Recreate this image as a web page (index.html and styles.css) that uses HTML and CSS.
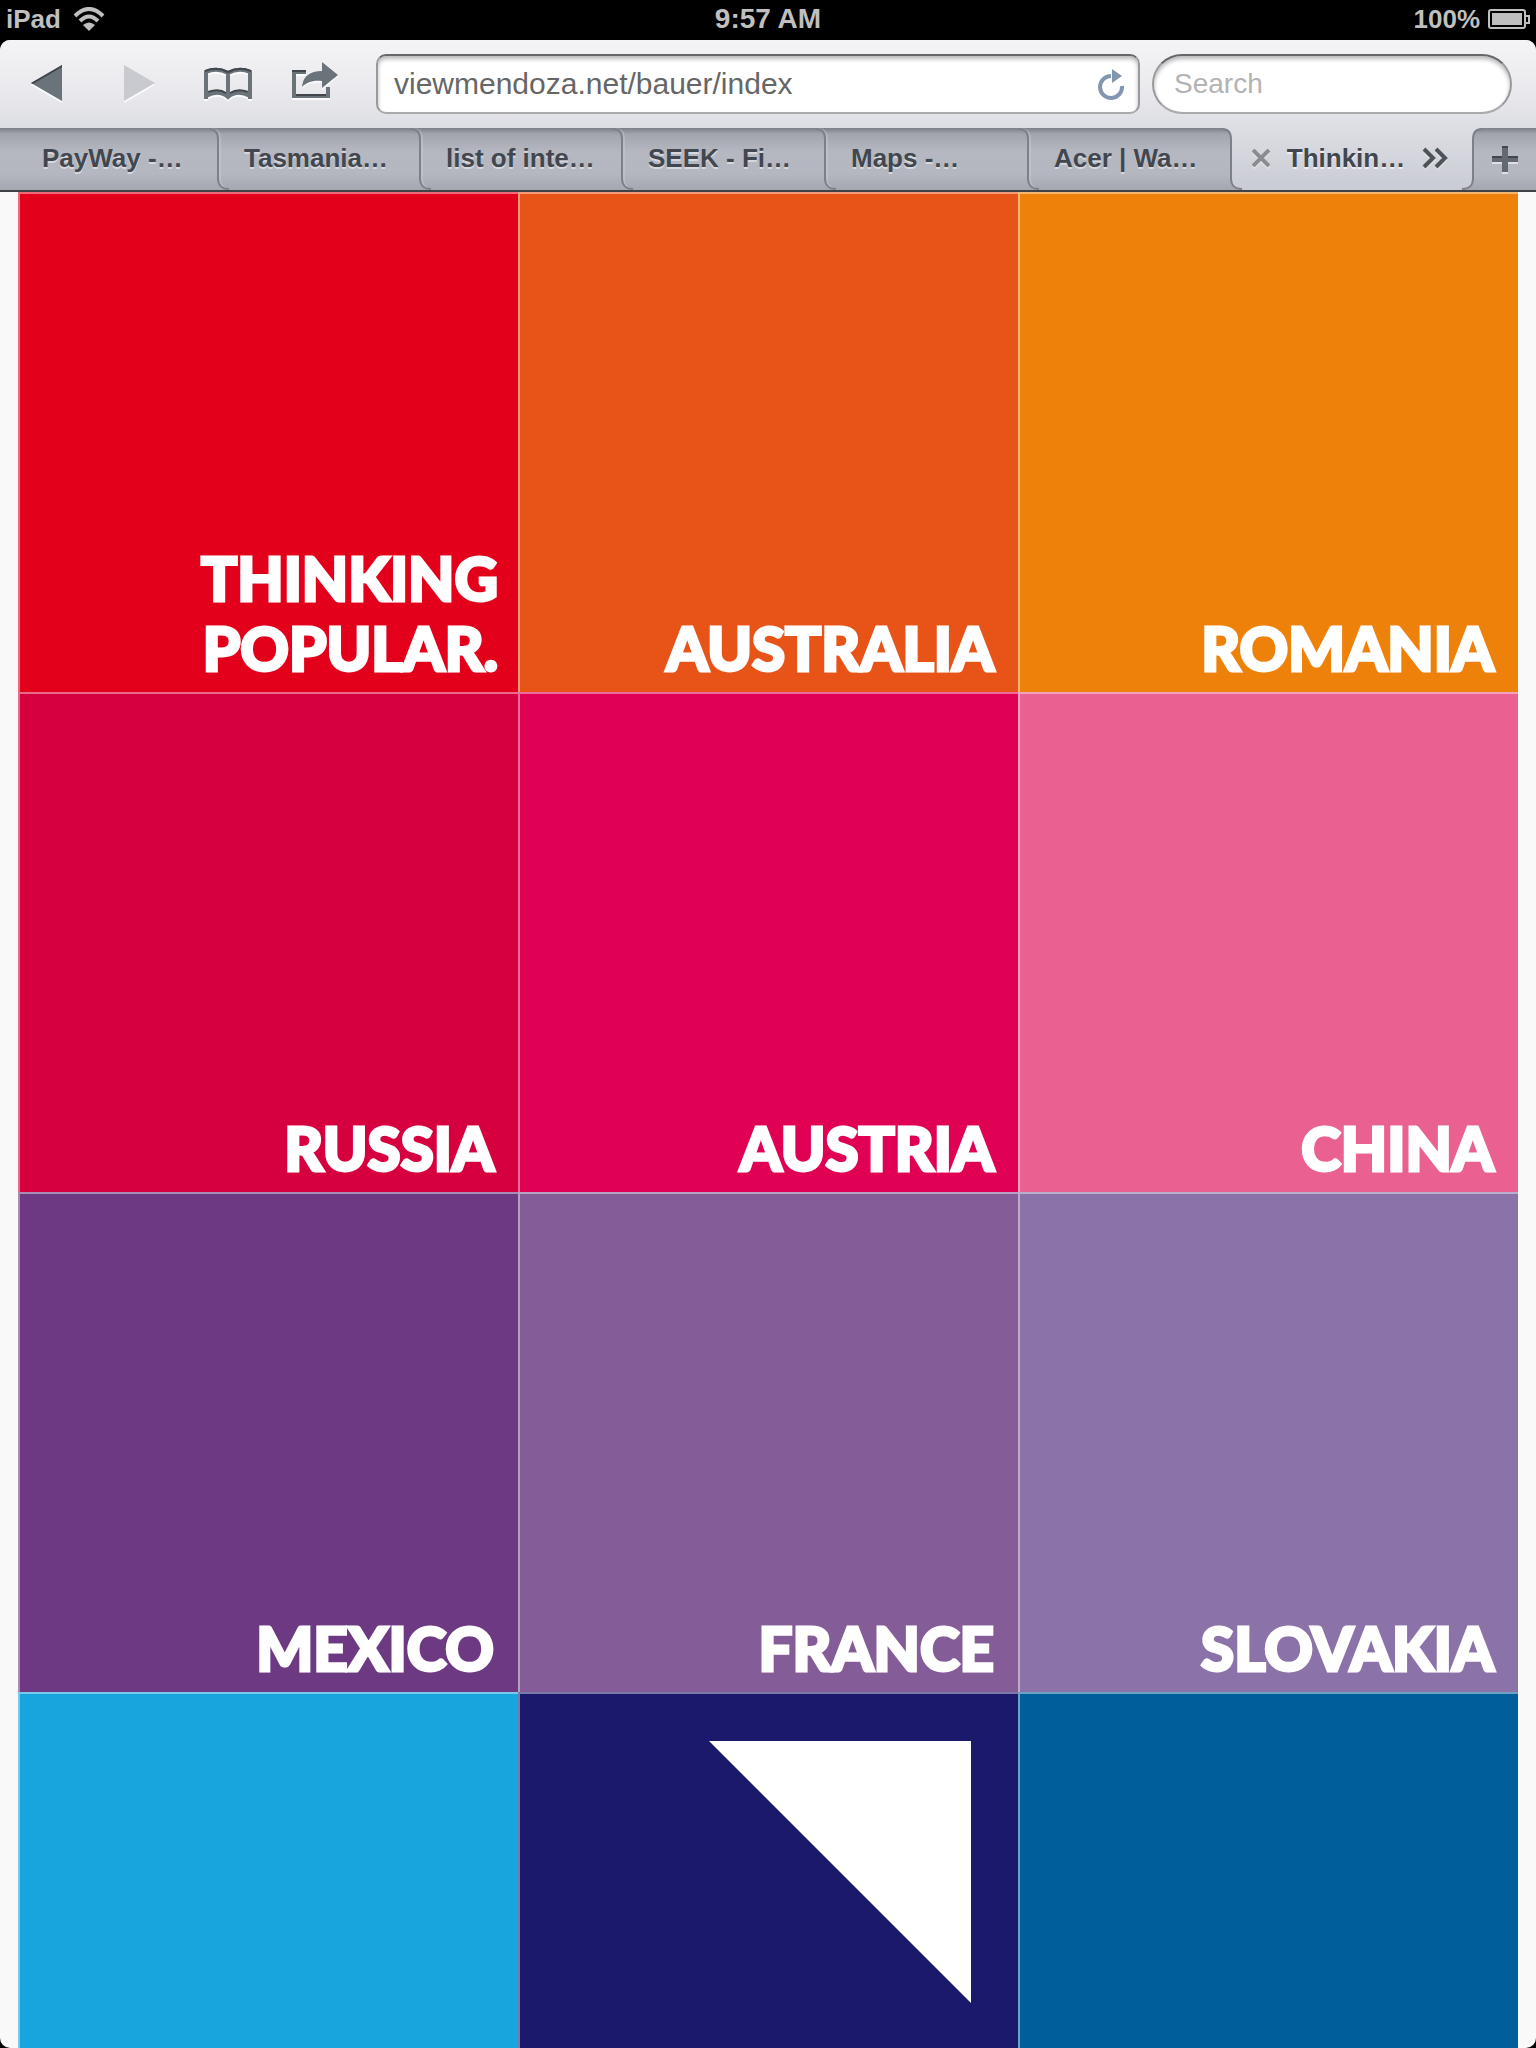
FILE: index.html
```html
<!DOCTYPE html>
<html lang="en">
<head>
<meta charset="utf-8">
<title>Thinking Popular</title>
<link rel="stylesheet" href="styles.css">
</head>
<body>
<svg class="defs" aria-hidden="true">
  <symbol id="seam" viewBox="0 0 20 62">
    <path d="M0 1C6 1 9 5 9 11V51C9 57 13 61 20 61" fill="none" stroke="#d0d2da" stroke-opacity=".35" stroke-width="2" transform="translate(2 0)"/>
    <path d="M0 1C6 1 9 5 9 11V51C9 57 13 61 20 61" fill="none" stroke="#7e8088" stroke-width="2"/>
  </symbol>
  <symbol id="seam-active" viewBox="0 0 20 62">
    <path d="M0 0C6 1 9 5 9 11H10V0Z" fill="#dddee3"/>
    <path d="M9 50C9 57 13 61 20 61V62H9Z" fill="#a6a8b1"/>
    <path d="M0 1C6 1 9 5 9 11V51C9 57 13 61 20 61" fill="none" stroke="#7e8088" stroke-width="2"/>
  </symbol>
</svg>
<div class="screen">
  <header class="status">
    <div class="carrier">iPad
      <svg width="32" height="24" viewBox="0 0 32 24"><g fill="none" stroke="#bfbfbf" stroke-width="4"><path d="M2 9Q16 -5 30 9"/><path d="M7 14Q16 5 25 14"/></g><path d="M10 18Q16 13 22 18L16 24Z" fill="#bfbfbf"/></svg>
    </div>
    <time>9:57 AM</time>
    <div class="power">100%
      <svg width="42" height="20" viewBox="0 0 42 20"><rect x="1" y="1" width="36" height="18" rx="2" fill="none" stroke="#bfbfbf" stroke-width="2"/><path d="M4 4H34V16H4Z" fill="#bfbfbf"/><path d="M38 7H41V14H38" fill="none" stroke="#bfbfbf" stroke-width="2"/></svg>
    </div>
  </header>
  <main class="browser">
    <div class="toolbar">
      <nav class="tools">
        <button type="button" aria-label="Back"><svg viewBox="0 0 90 88"><path d="M29 43L60 25V61Z"/><path class="edge" d="M29 43L60 25V27L31 44Z"/></svg></button>
        <button type="button" aria-label="Forward" disabled><svg viewBox="0 0 90 88"><path d="M32 25L63 43L32 61Z"/></svg></button>
        <button type="button" aria-label="Bookmarks"><svg viewBox="0 0 90 88"><path class="line" d="M24 59V32Q35 27 46 33Q57 27 68 32V59M46 33V57M24 56Q37 49 46 57Q55 49 68 56"/><path class="thin" d="M23 31Q35 26 46 32Q57 26 69 31M26 52Q37 48 44 53M48 53Q56 48 66 52"/></svg></button>
        <button type="button" aria-label="Share"><svg viewBox="0 0 90 88"><path class="line" d="M34 32H22V56H56V47"/><path class="thin" d="M34 31H20M24 55H54"/><path d="M30 47C31 36 38 31 50 31V22L66 35L50 48V41C41 40 35 42 30 47Z"/></svg></button>
      </nav>
      <div class="field address">
        <input type="text" aria-label="Address" value="viewmendoza.net/bauer/index">
        <button type="button" aria-label="Reload"><svg viewBox="0 0 60 60"><path d="M42 32A11 11 0 1 1 31 22" fill="none" stroke="#8296b0" stroke-width="4"/><path d="M32 15L42 22L32 29Z" fill="#8296b0"/></svg></button>
      </div>
      <div class="field search"><input type="search" aria-label="Search" placeholder="Search"></div>
    </div>
    <div class="tabs">
      <button type="button" class="tab first">PayWay -…<svg class="seam"><use href="#seam"/></svg></button>
      <button type="button" class="tab">Tasmania…<svg class="seam"><use href="#seam"/></svg></button>
      <button type="button" class="tab">list of inte…<svg class="seam"><use href="#seam"/></svg></button>
      <button type="button" class="tab">SEEK - Fi…<svg class="seam"><use href="#seam"/></svg></button>
      <button type="button" class="tab">Maps -…<svg class="seam"><use href="#seam"/></svg></button>
      <button type="button" class="tab">Acer | Wa…<svg class="seam"><use href="#seam-active"/></svg></button>
      <div class="tab active">
        <button type="button" aria-label="Close tab"><svg width="18" height="18" viewBox="0 0 18 18"><path d="M1 1L17 17M17 1L1 17" stroke="#8a8c91" stroke-width="4"/></svg></button>
        <span>Thinkin…</span>
        <button type="button" class="more" aria-label="More tabs"><svg width="26" height="22" viewBox="0 0 26 22"><path d="M2 2L11 11L2 20M14 2L23 11L14 20" fill="none" stroke="#4e535a" stroke-width="4"/></svg></button>
      </div>
      <button type="button" class="tab new" aria-label="New tab"><svg class="seam flipped"><use href="#seam-active"/></svg><svg width="26" height="26" viewBox="0 0 26 26"><path d="M13 0V26M0 13H26" stroke="#636970" stroke-width="6"/><path d="M0 11H10M16 11H26M10 1H16" stroke="#42474e" stroke-width="2"/></svg></button>
    </div>
    <div class="page">
      <div class="tiles">
        <a href="#" class="tile red">THINKING<br>POPULAR.</a>
        <a href="#" class="tile vermilion">AUSTRALIA</a>
        <a href="#" class="tile orange">ROMANIA</a>
        <a href="#" class="tile crimson">RUSSIA</a>
        <a href="#" class="tile magenta">AUSTRIA</a>
        <a href="#" class="tile pink">CHINA</a>
        <a href="#" class="tile purple">MEXICO</a>
        <a href="#" class="tile violet">FRANCE</a>
        <a href="#" class="tile lavender">SLOVAKIA</a>
        <a href="#" class="tile sky" aria-label="Sky blue"></a>
        <a href="#" class="tile navy" aria-label="Bauer"><svg viewBox="0 0 500 500"><path d="M191 49H453V311Z" fill="#fff"/></svg></a>
        <a href="#" class="tile blue" aria-label="Blue"></a>
      </div>
    </div>
  </main>
</div>
</body>
</html>
```
FILE: styles.css
```css
* { box-sizing: border-box; }

body {
  margin: 0;
  background: #000;
  font-family: "Liberation Sans", Arial, sans-serif;
}

button {
  margin: 0;
  padding: 0;
  border: 0;
  background: none;
  font: inherit;
  color: inherit;
}

svg { display: block; }

.defs { position: absolute; width: 0; height: 0; }

.screen {
  display: flex;
  flex-direction: column;
  height: 100vh;
}

.status {
  display: grid;
  grid-template-columns: 1fr auto 1fr;
  align-items: center;
  height: 40px;
  flex: none;
  padding: 0 6px 2px;
  color: #bfbfbf;
  font-size: 26px;
  font-weight: bold;
}

.status time { font-size: 28px; }

.carrier, .power {
  display: flex;
  align-items: center;
  gap: 12px;
}

.power { justify-content: flex-end; gap: 8px; }

.browser {
  display: flex;
  flex-direction: column;
  flex: 1;
  min-height: 0;
  overflow: hidden;
  border-radius: 10px;
  background: #f9f9f9;
}

.toolbar {
  display: flex;
  flex: none;
  align-items: center;
  gap: 12px;
  height: 88px;
  padding: 0 24px 0 2px;
  background: linear-gradient(#f4f4f6, #eaeaee 55%, #dddee3);
}

.tools { display: flex; width: 362px; flex: none; }
.tools button { width: 90px; height: 88px; }
.tools svg {
  width: 90px;
  height: 88px;
  fill: #6a727a;
  filter: drop-shadow(0 2px 0 #fbfbfd);
}
.tools .edge { fill: #40464c; }
.tools .line { fill: none; stroke: #6a727a; stroke-width: 4; }
.tools .thin { fill: none; stroke: #40464c; stroke-width: 2; }
.tools button:disabled svg { fill: #c9cacf; }

.field {
  display: flex;
  height: 60px;
  overflow: hidden;
  border: 2px solid #98999c;
  border-top-color: #66676a;
  border-bottom-color: #a9aaa9;
  border-radius: 10px;
  background: #fff;
  box-shadow: inset 0 3px 4px #b8b8bb;
}

.field input {
  flex: 1;
  min-width: 0;
  padding: 0 16px;
  border: 0;
  outline: 0;
  background: none;
  font-family: inherit;
  font-size: 30px;
  color: #666;
}

.field button svg { width: 60px; height: 60px; margin: -2px -2px 0 0; }
.address { flex: 1; }
.search { width: 360px; border-radius: 30px; }
.search input { padding: 0 20px; font-size: 28px; }
.search input::placeholder { color: #b3b3b3; opacity: 1; }

.tabs {
  display: grid;
  flex: none;
  grid-template-columns: 218fr 202fr 202fr repeat(3, 203fr) 242fr 63fr;
  height: 64px;
  border-bottom: 2px solid #404146;
}

.tab {
  position: relative;
  display: flex;
  align-items: center;
  min-width: 0;
  padding: 0 0 2px 26px;
  background: linear-gradient(#7d7f86, #a3a5ae 6px, #b6b8c1 24px, #b5b7c0 46px, #a5a7b0);
  color: #42474f;
  font-size: 26px;
  font-weight: bold;
  white-space: nowrap;
  text-shadow: 0 2px 0 #d6d8de;
}

.tab.first { padding-left: 42px; }

.tab.active {
  justify-content: space-between;
  padding: 0 25px 2px 21px;
  background: linear-gradient(#dddee3, #c9cbd5);
  text-shadow: 0 2px 0 #eeeff3;
}

.tab svg { filter: drop-shadow(0 2px 0 #dfe0e6); }

.tab .seam {
  position: absolute;
  z-index: 1;
  top: 0;
  right: -11px;
  width: 20px;
  height: 62px;
  filter: none;
}

.tab .seam.flipped { right: auto; left: -11px; transform: scaleX(-1); }
.tab.new { padding: 0 0 0 19px; }

.page { flex: 1; min-height: 0; overflow: hidden; padding: 0 18px; }

.tiles { display: grid; grid-template-columns: repeat(3, 1fr); }

.tile {
  display: flex;
  align-items: flex-end;
  justify-content: flex-end;
  aspect-ratio: 1;
  min-width: 0;
  padding: 0 24px 9px 0;
  box-shadow: inset 2px 2px 0 rgba(255, 255, 255, .42);
  color: #fff;
  font-family: "Lato Black", Lato, sans-serif;
  font-size: 60px;
  font-weight: 900;
  line-height: 70px;
  -webkit-text-stroke: 3px #fff;
  text-align: right;
  text-decoration: none;
}

.red { padding-right: 20px; background: #e3001a; }
.vermilion { background: #e85418; }
.orange { background: #ee810a; }
.crimson { background: #d7003f; }
.magenta { background: #e00054; }
.pink { background: #e96091; }
.purple { background: #6c3982; }
.violet { background: #845c98; }
.lavender { background: #8b72a8; }
.sky { background: #18a4dc; }
.navy { padding: 0; background: #1a196b; }
.navy svg { width: 100%; height: 100%; }
.blue { background: #005f9b; }
```
